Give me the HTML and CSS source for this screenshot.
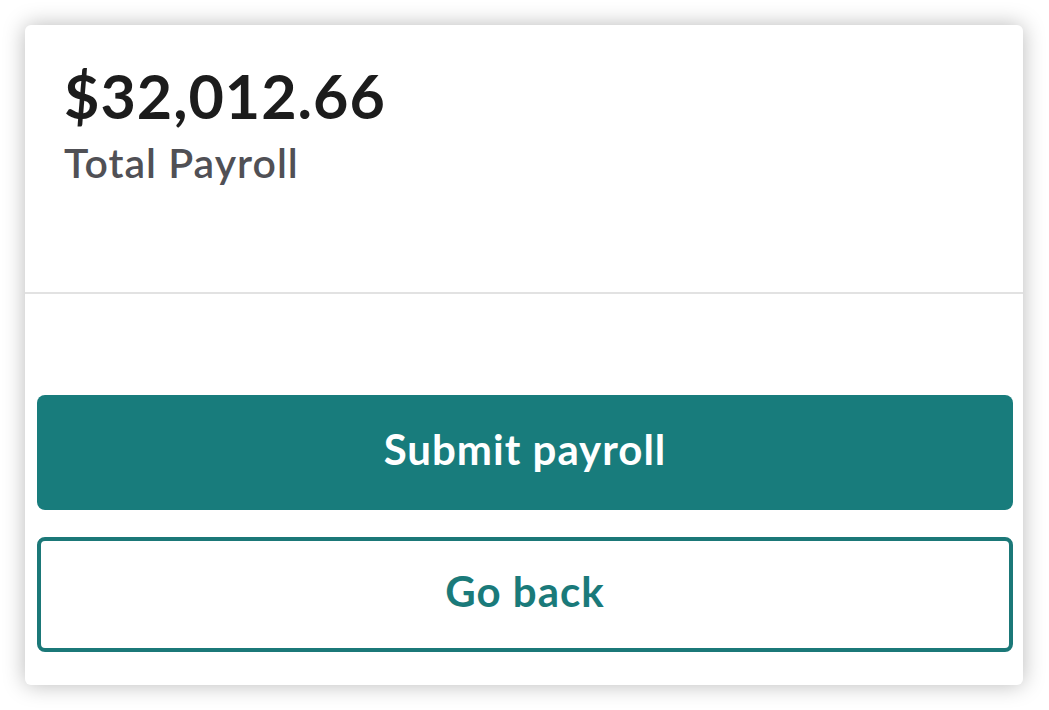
FILE: index.html
```html
<!DOCTYPE html>
<html>
<head>
<link rel="stylesheet" href="styles.css">
</head>
<body>

<div class="card">
  <div class="summary">
    <div class="amount">$32,012.66</div>
    <div class="label">Total Payroll</div>
  </div>

  <div class="actions">
    <button class="btn primary">Submit payroll</button>
    <button class="btn secondary">Go back</button>
  </div>
</div>

</body>
</html>
```

FILE: styles.css
```css
html, body {
  margin: 0;
  padding: 0;
  background-color: #fff;
}

body {
  padding: 25px 26px 25px 25px;
  font-family: "Lato", "Noto Sans", sans-serif;
}

.card {
  background-color: #fff;
  border-radius: 6px;
  box-shadow: 0 0 22px rgba(0, 0, 0, 0.28);
  height: 660px;
  display: flex;
  flex-direction: column;
  overflow: hidden;
}

.summary {
  height: 269px;
  padding: 38px 40px 0 39px;
  box-sizing: border-box;
  border-bottom: 2px solid #e2e2e2;
}

.amount {
  font-size: 61px;
  font-weight: 700;
  color: #1c1c1c;
  line-height: 66px;
  letter-spacing: 1px;
}

.label {
  font-size: 41px;
  font-weight: 600;
  color: #505055;
  line-height: 50px;
  letter-spacing: 1px;
  margin-top: 9px;
}

.actions {
  display: flex;
  flex-direction: column;
  gap: 27px;
  padding: 101px 10px 0 12px;
}

.btn {
  height: 115px;
  padding: 0 0 7px 0;
  border-radius: 8px;
  font-family: inherit;
  font-size: 42px;
  font-weight: 700;
  letter-spacing: 1px;
  cursor: pointer;
}

.primary {
  background-color: #187c7c;
  color: #fff;
  border: none;
}

.secondary {
  background-color: #fff;
  color: #1a7a7a;
  border: 4px solid #1b7878;
}
```
